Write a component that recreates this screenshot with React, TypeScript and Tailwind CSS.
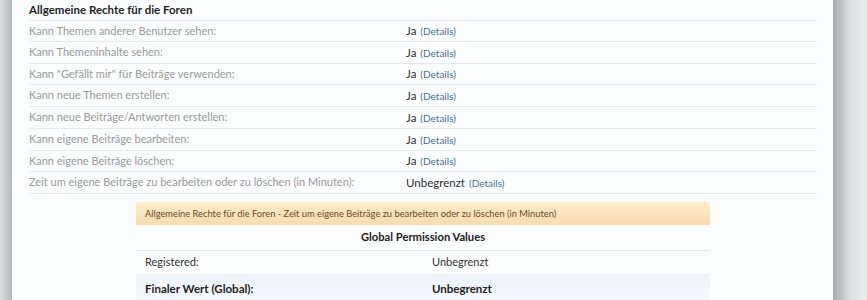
import React from "react";

const rows: { label: string; value: string; h: string }[] = [
  { label: "Kann Themen anderer Benutzer sehen:", value: "Ja", h: "h-[21px]" },
  { label: "Kann Themeninhalte sehen:", value: "Ja", h: "h-[22px]" },
  { label: 'Kann "Gefällt mir" für Beiträge verwenden:', value: "Ja", h: "h-[21px]" },
  { label: "Kann neue Themen erstellen:", value: "Ja", h: "h-[22px]" },
  { label: "Kann neue Beiträge/Antworten erstellen:", value: "Ja", h: "h-[22px]" },
  { label: "Kann eigene Beiträge bearbeiten:", value: "Ja", h: "h-[22px]" },
  { label: "Kann eigene Beiträge löschen:", value: "Ja", h: "h-[21px]" },
  {
    label: "Zeit um eigene Beiträge zu bearbeiten oder zu löschen (in Minuten):",
    value: "Unbegrenzt",
    h: "h-[22px]",
  },
];

export default function App() {
  return (
    <div
      className="flex h-[300px] w-[867px] overflow-hidden"
      style={{ fontFamily: "Lato, 'Open Sans', sans-serif" }}
    >
      <div className="w-[12px] shrink-0 bg-gradient-to-r from-[#dcdfe2] to-[#b3b8bd]" />
      <div className="w-[821px] shrink-0 bg-[#fcfdfe] pl-[17px] pr-[16px]">
        <div className="flex h-[21px] items-center border-b border-[#e6eaee] text-[11.5px] font-bold text-[#1f1f1f]">
          Allgemeine Rechte für die Foren
        </div>
        {rows.map((r) => (
          <div
            key={r.label}
            className={`flex items-center border-b border-[#e6eaee] ${r.h}`}
          >
            <div className="w-[377px] text-[11px] text-[#9a9a9a]">{r.label}</div>
            <div className="flex items-baseline gap-[4px]">
              <span className="text-[11.5px] text-[#2e2e2e]">{r.value}</span>
              <span className="text-[10px] text-[#4a7092]">(Details)</span>
            </div>
          </div>
        ))}
        <div className="mx-auto mt-[8px] w-[574px]">
          <div className="flex h-[23px] items-center bg-gradient-to-b from-[#fdebcc] to-[#f8dbb0] px-[9px] text-[9.3px] text-[#6b4a1c]">
            Allgemeine Rechte für die Foren - Zeit um eigene Beiträge zu bearbeiten oder zu löschen (in Minuten)
          </div>
          <div className="flex h-[26px] items-center justify-center border-b border-[#e3e8ed] text-[11.2px] font-bold text-[#222]">
            Global Permission Values
          </div>
          <div className="flex h-[23px] items-center text-[11px] text-[#333]">
            <div className="w-[287px] px-[9px]">Registered:</div>
            <div className="px-[9px]">Unbegrenzt</div>
          </div>
          <div className="flex h-[30px] items-center bg-gradient-to-b from-[#eef4fa] to-[#f6f9fc] text-[11.5px] font-bold text-[#222]">
            <div className="w-[287px] px-[9px]">Finaler Wert (Global):</div>
            <div className="px-[9px]">Unbegrenzt</div>
          </div>
        </div>
      </div>
      <div className="flex-1 bg-gradient-to-r from-[#a6abb0] via-[#dcdfe2] to-[#ececec]" />
    </div>
  );
}
